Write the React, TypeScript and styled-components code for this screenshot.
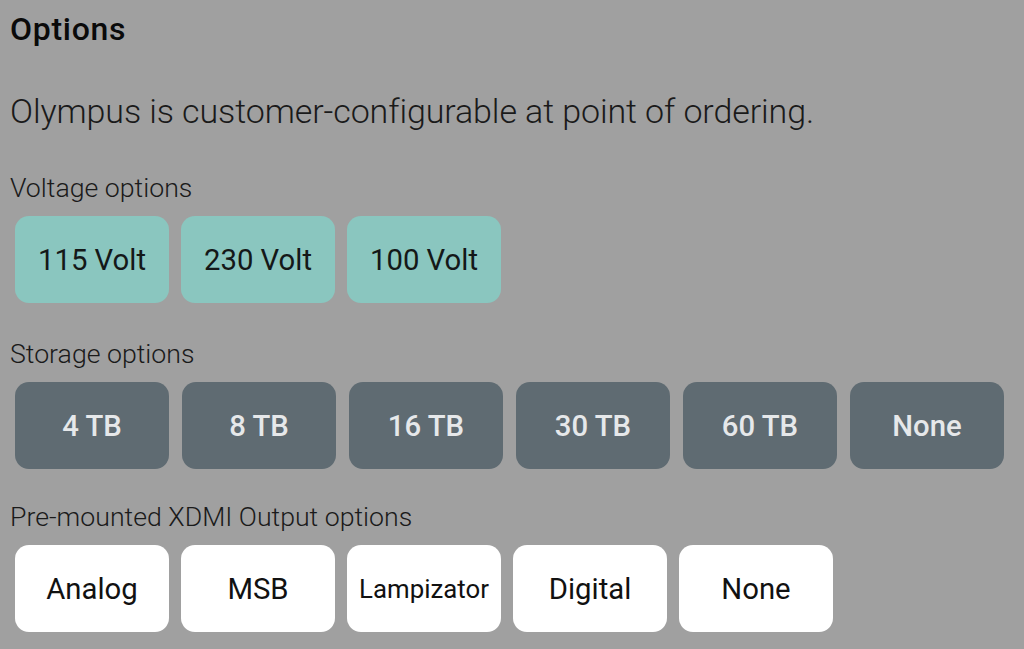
import React from 'react'
import styled, { createGlobalStyle } from 'styled-components'

type Variant = 'teal' | 'slate' | 'white'

const palette: Record<Variant, { bg: string; fg: string; weight: number }> = {
  teal: { bg: '#8ac6bf', fg: '#141818', weight: 400 },
  slate: { bg: '#5f6b72', fg: '#e6e8ea', weight: 500 },
  white: { bg: '#ffffff', fg: '#111111', weight: 400 },
}

const GlobalStyle = createGlobalStyle`
  html, body {
    margin: 0;
    padding: 0;
    background: #a0a0a0;
  }
  body {
    font-family: Roboto, 'Liberation Sans', sans-serif;
    color: #111;
  }
`

const Page = styled.main`
  width: 1024px;
  height: 649px;
  overflow: hidden;
  padding: 10px 0 0 10px;
  box-sizing: border-box;
  display: flex;
  flex-direction: column;
`

const Title = styled.h2`
  margin: 0;
  font-size: 32px;
  font-weight: 500;
  line-height: 38px;
  letter-spacing: 0.7px;
  color: #0a0a0a;
`

const Lead = styled.p`
  margin: 43px 0 0;
  font-size: 34px;
  font-weight: 300;
  line-height: 40px;
  color: #1a1a1a;
  letter-spacing: -0.1px;
`

const Group = styled.section<{ $top: number }>`
  margin-top: ${(p) => p.$top}px;
  display: flex;
  flex-direction: column;
`

const Label = styled.div`
  font-size: 26.7px;
  font-weight: 300;
  line-height: 30px;
  color: #1a1a1a;
`

const Row = styled.div<{ $gap: number }>`
  display: flex;
  gap: ${(p) => p.$gap}px;
  margin: 13px 0 0 5px;
`

const Choice = styled.button<{ $variant: Variant; $small?: boolean }>`
  width: 154px;
  height: 87px;
  border: none;
  border-radius: 14px;
  padding: 0;
  display: flex;
  align-items: center;
  justify-content: center;
  font-family: Roboto, 'Liberation Sans', sans-serif;
  font-size: ${(p) => (p.$small ? 25.8 : 29.3)}px;
  font-weight: ${(p) => palette[p.$variant].weight};
  background: ${(p) => palette[p.$variant].bg};
  color: ${(p) => palette[p.$variant].fg};
  cursor: pointer;
`

const groups: { label: string; variant: Variant; top: number; gap: number; items: string[] }[] = [
  { label: 'Voltage options', variant: 'teal', top: 42, gap: 12, items: ['115 Volt', '230 Volt', '100 Volt'] },
  {
    label: 'Storage options',
    variant: 'slate',
    top: 36,
    gap: 13,
    items: ['4 TB', '8 TB', '16 TB', '30 TB', '60 TB', 'None'],
  },
  {
    label: 'Pre-mounted XDMI Output options',
    variant: 'white',
    top: 33,
    gap: 12,
    items: ['Analog', 'MSB', 'Lampizator', 'Digital', 'None'],
  },
]

export default function App() {
  return (
    <Page>
      <GlobalStyle />
      <Title>Options</Title>
      <Lead>Olympus is customer-configurable at point of ordering.</Lead>
      {groups.map((g) => (
        <Group key={g.label} $top={g.top}>
          <Label>{g.label}</Label>
          <Row $gap={g.gap}>
            {g.items.map((item) => (
              <Choice key={item} $variant={g.variant} $small={item === 'Lampizator'}>
                {item}
              </Choice>
            ))}
          </Row>
        </Group>
      ))}
    </Page>
  )
}
